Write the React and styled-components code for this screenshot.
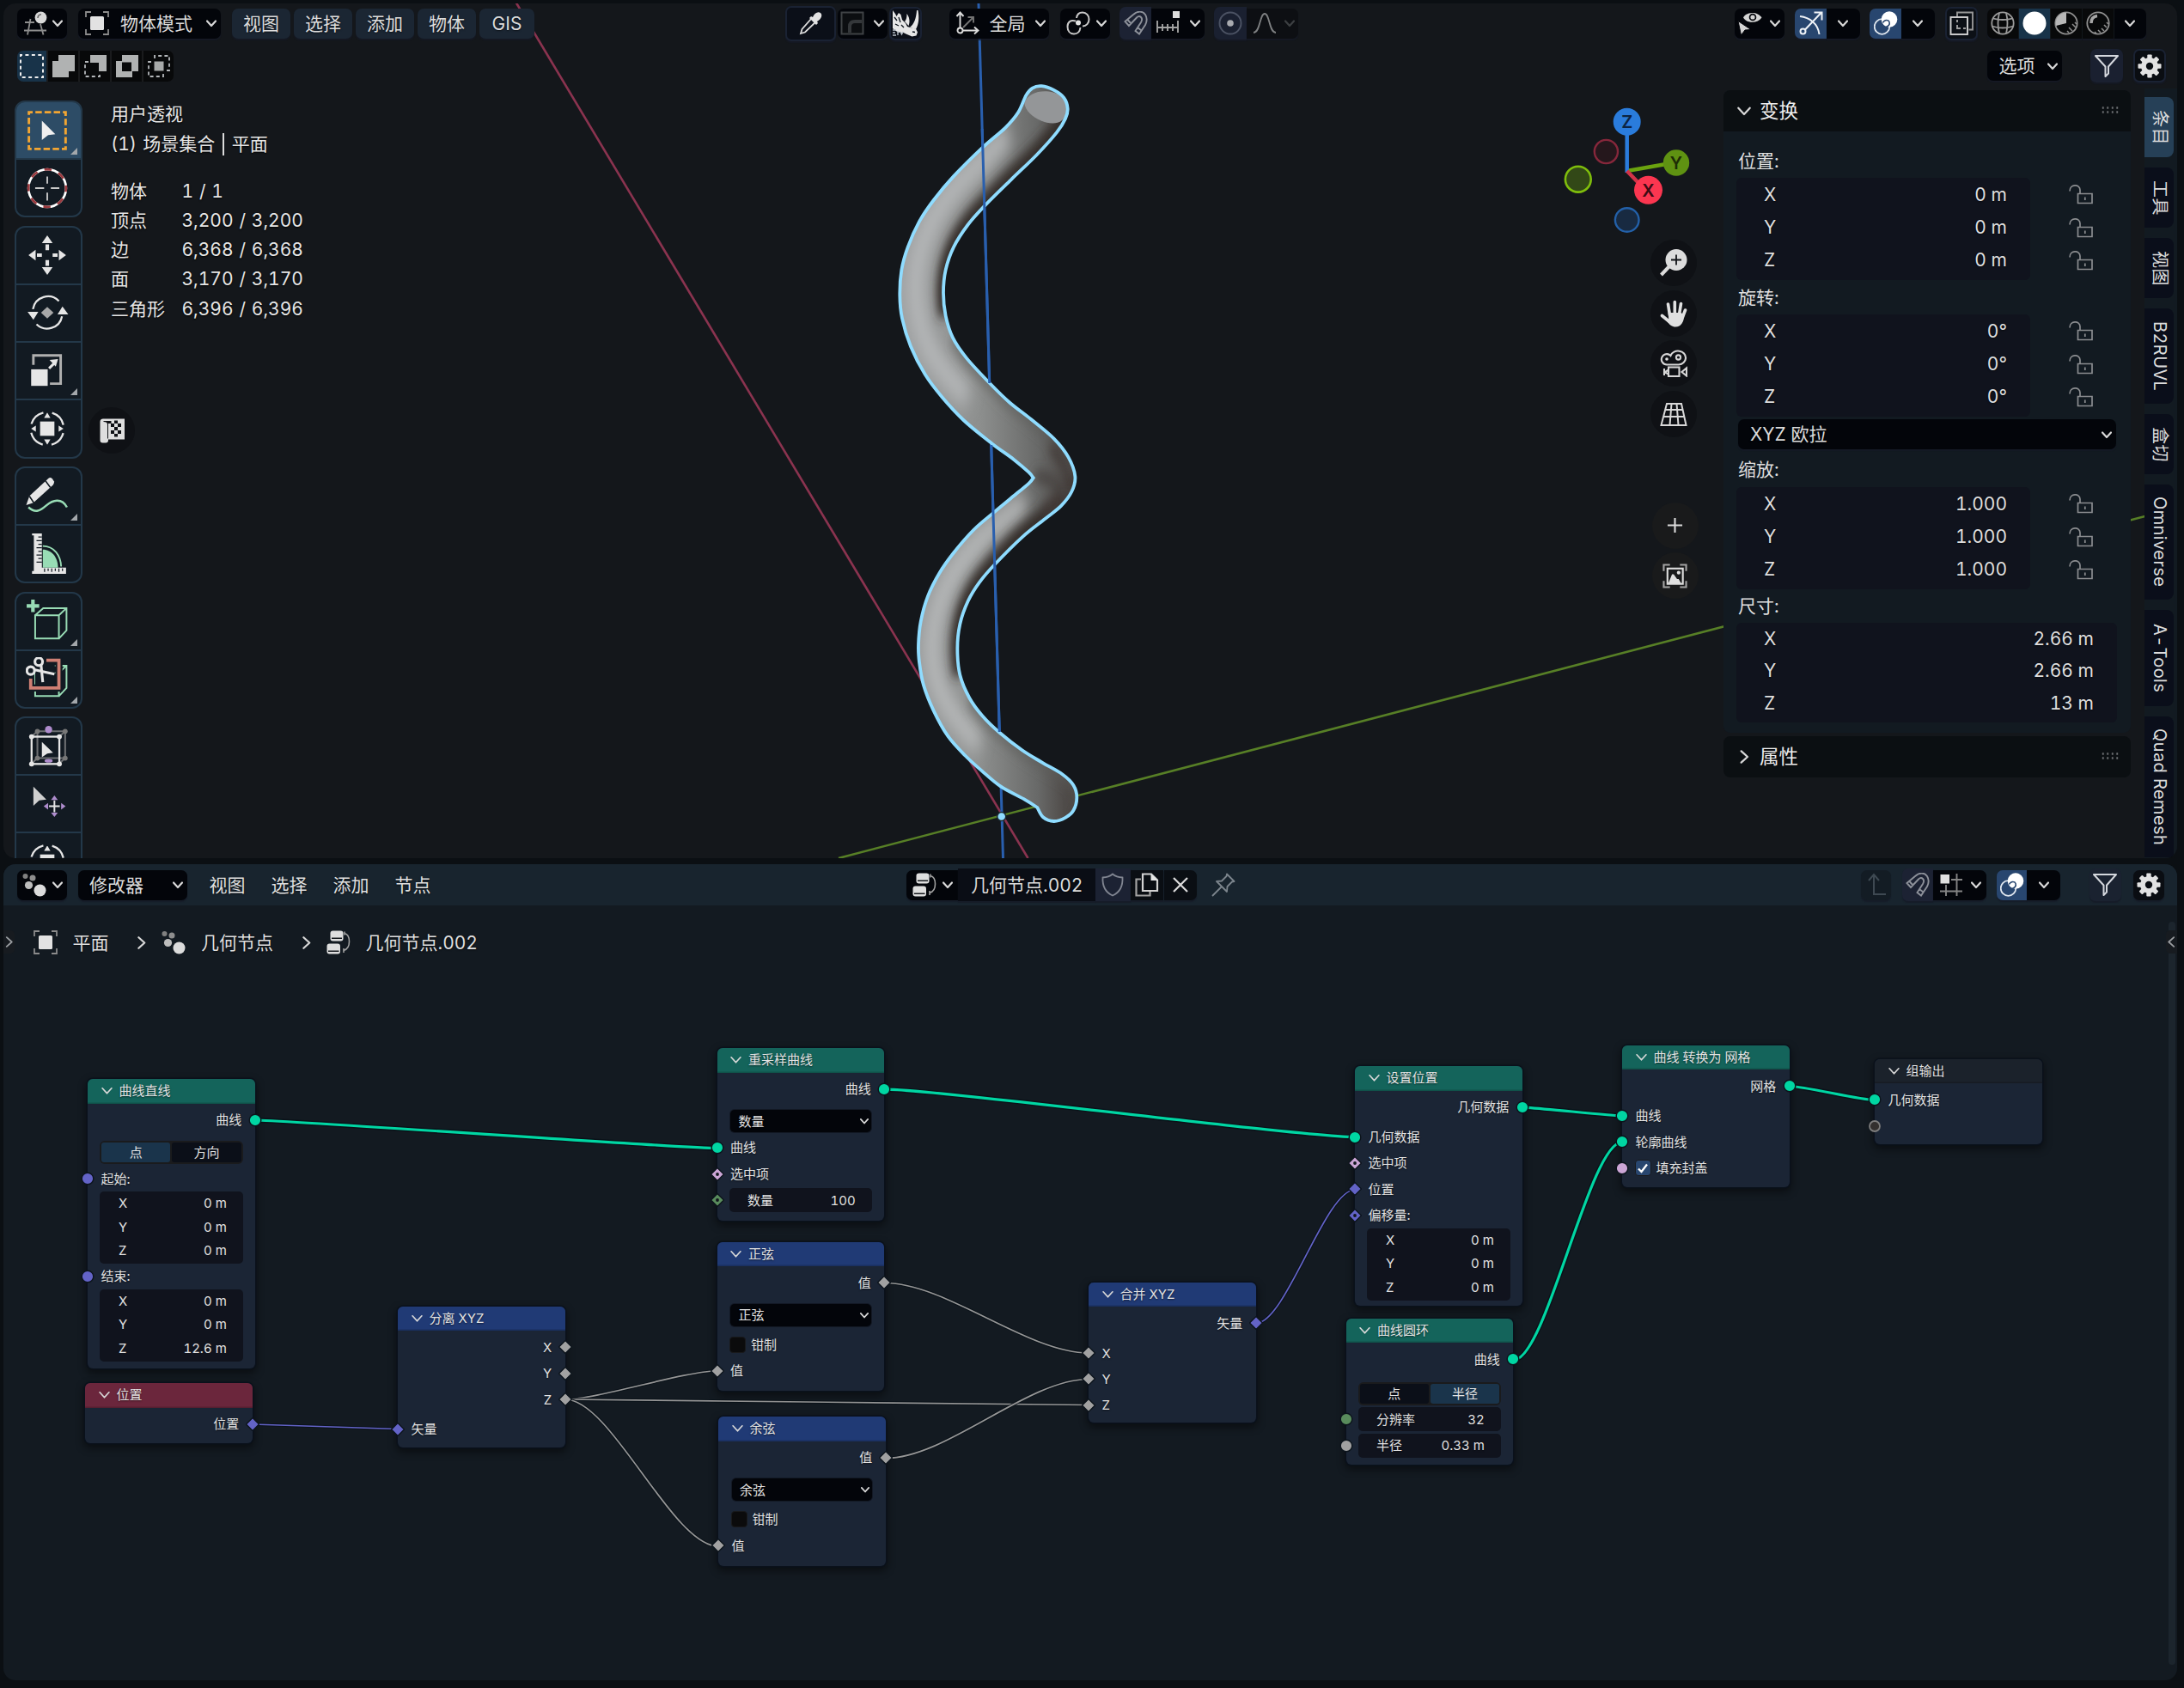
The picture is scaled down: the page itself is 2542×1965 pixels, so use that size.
import React from "react";
import styled, { createGlobalStyle, css } from "styled-components";

const GlobalStyle = createGlobalStyle`
  * { box-sizing: border-box; }
  body {
    margin: 0;
    background: #0b0f13;
    font-family: Inter, "Noto Sans CJK SC", sans-serif;
    font-size: 21px;
    font-variant-numeric: tabular-nums;
    color: #dfdfdf;
  }
  svg { display: block; flex: none; }
`;

const Screen = styled.div`
  width: 2542px;
  height: 1965px;
  padding: 4px 8px 9px 4px;
  display: flex;
  flex-direction: column;
  gap: 7px;
  overflow: hidden;
  white-space: nowrap;
  line-height: 1;
`;

/* ---------- shared header parts ---------- */

const Group = styled.div`
  display: flex;
  align-items: center;
  margin-left: ${(p) => (p.$push ? "auto" : `${p.$ml || 0}px`)};
`;

const Button = styled.div`
  width: ${(p) => p.$w}px;
  height: ${(p) => p.$h || 35}px;
  margin-left: ${(p) => p.$ml || 0}px;
  margin-top: ${(p) => p.$mt || 0}px;
  padding: 0 ${(p) => p.$pr ?? 6}px 0 ${(p) => p.$pl ?? 6}px;
  display: flex;
  align-items: center;
  justify-content: ${(p) => p.$justify || "space-between"};
  flex: none;
  border-radius: ${(p) => p.$radius || "7px"};
  background: ${(p) => p.$bg || "#03050a"};
  color: #dcdcdc;
  box-shadow: 0 2px 1px rgba(22, 26, 38, 0.7);
  ${(p) => p.$ring && css`border: 2px solid #1a2233;`}
`;

const Label = styled.span`
  margin-left: ${(p) => p.$ml || 0}px;
  text-shadow: 0 1px 2px rgba(0, 0, 0, 0.55);
`;

const LEFT = "7px 0 0 7px";
const RIGHT = "0 7px 7px 0";

const Chevron = ({ w = 12, color = "#d8d8d8", dir = "down", sw = 2.2 }) => {
  const turn = { down: 0, right: -90, left: 90 }[dir];
  return (
    <svg width={w} height={w} viewBox="0 0 12 12" fill="none" stroke={color} strokeWidth={sw * (12 / w)}
      strokeLinecap="round" strokeLinejoin="round">
      <path d="M1 3.500 6 9l5-5.500" transform={`rotate(${turn} 6 6)`} />
    </svg>
  );
};

/* ---------- icons ---------- */

const Icon = ({ s = 28, box = 28, children, ...rest }) => (
  <svg width={s} height={s} viewBox={`0 0 ${box} ${box}`} fill="none" stroke="#dcdcdc" strokeWidth="2" {...rest}>
    {children}
  </svg>
);

const View3dIcon = () => (
  <Icon stroke="#8d8d8d" strokeWidth="1.8">
    <path d="M2 13h11M1 22.500h26M8.500 9 5 27.500M20 15l3.500 12.500" />
    <circle cx="20.500" cy="7.500" r="6.900" fill="#d9d9d9" stroke="none" />
    <path d="M17 8c0-2.500 1.500-4 4-4.300" stroke="#6a6a6a" strokeWidth="1.500" />
  </Icon>
);

const ObjectIcon = () => (
  <Icon stroke="#8b8b8b" strokeWidth="1.800">
    <path d="M1 7V1h6M21 1h6v6M27 21v6h-6M7 27H1v-6" />
    <rect x="6" y="6" width="16" height="16" rx="1.500" fill="#e2e2e2" stroke="none" />
  </Icon>
);

const GeoNodesIcon = () => (
  <Icon stroke="none" fill="#dcdcdc">
    <circle cx="3.500" cy="4" r="3" fill="#808080" />
    <circle cx="12" cy="6" r="3.500" fill="#8e8e8e" />
    <circle cx="7.500" cy="14.500" r="4.600" fill="#bdbdbd" />
    <circle cx="20.500" cy="20.500" r="7" />
  </Icon>
);

const NodeTreeIcon = () => (
  <Icon stroke="#a0a0a0" strokeWidth="1.600">
    <path d="M21 3.500c4 1 5.500 4 5.500 9.500s-1.500 9-6.500 10.500M21 1.500v4M20 21v5" />
    <rect x="4.500" y="0.500" width="15" height="12" rx="3" fill="#dedede" stroke="none" />
    <rect x="0.500" y="15.500" width="15.500" height="12" rx="3" fill="#dedede" stroke="none" />
    <path d="M6 9.300h12M2 24.300h12.500" stroke="#15181d" />
  </Icon>
);

const EyedropperIcon = () => (
  <Icon strokeWidth="1.800">
    <path d="M2 26l1.500-5L14.500 8.500l4.500 4.500L7 24.500 2 26z" />
    <path d="M16 7c2-5 6-7 9-5 2.500 2 1.500 7-4 10l1 2-2 2-8-8 2-2z" fill="#e2e2e2" stroke="none" />
  </Icon>
);

const CornerIcon = () => (
  <Icon stroke="#3f4245">
    <rect x="1.500" y="1.500" width="25" height="25" fill="#0c0e11" />
    <path d="M11 25V18q0-6 6-6h8" strokeWidth="4" stroke="#34373a" />
  </Icon>
);

const RhinoIcon = () => (
  <svg width="32" height="32" viewBox="0 0 32 32" fill="#e6e6e6">
    <path d="M1 1l3 4 1.500 3L8 4l2.500 2 1.500 6 4 4 2 4 5 1.500 5 1 2 4-1.500 4-5 1-7-3-5-2.500-4 1L1 22z" />
    <path d="M21 21c5-4 7.500-11 8-20h1.500c1.500 8 1 16-2.500 22z" />
    <path d="M15 14c2-2 2.500-5 2.500-9 3 4 4 9 2 14z" />
    <path d="M1 24h4M1 27h3M1 30h4M7 25v5M10 26l1.500 3 1.500-3" stroke="#b9c0c8" strokeWidth="1.400" />
    <path d="M3 9l3 4M8 9l2 6M4 17l4 2M11 18l3 3M24 26l3 0.500" stroke="#0b121b" strokeWidth="1.300" />
  </svg>
);

const OrientationIcon = () => (
  <Icon strokeWidth="1.900">
    <path d="M9 19 20 8M14.500 7H21v6.500" stroke="#747474" />
    <path d="M5.500 19.500V2M1.500 6l4-4.500 4 4.500M8.500 22.500H26M22 18.500l4.500 4-4.500 4" />
    <circle cx="5.500" cy="22.500" r="3" />
  </Icon>
);

const PivotIcon = () => (
  <Icon stroke="#c8c8c8">
    <path d="M11 11.500C5 9.500 1.500 13 1.500 18c0 5 3 8.500 7.500 8.500S16 23 16.500 19" />
    <path d="M12 8C12.500 4 15 1.500 19 1.500c4.500 0 7.500 3.500 7.500 8s-3 8-7.500 8" />
    <circle cx="14" cy="13.500" r="3" fill="#e2e2e2" stroke="none" />
  </Icon>
);

const MagnetIcon = ({ c = "#8d919a" }) => (
  <Icon stroke={c} strokeWidth="1.900">
    <path d="M1.500 12 11 4C16-0.500 22-0.500 25 4c2.500 4 2 8 0 12l-7 10.500-4.500-3.500 6.500-10c1.500-2.500 1.500-4.500 0-6-1.500-1.500-3.500-1-5 0.500L6 17zM4 9.500l4.500 5M20.500 22.500 16 19" />
  </Icon>
);

const IncrementIcon = () => (
  <Icon stroke="#a2a2a2" strokeWidth="1.900">
    <path d="M2 11v14M26 11v14M2 19h24M8 15v8M14 15v8M20 15v8" />
    <rect x="20" y="0" width="8" height="8" fill="#dedede" stroke="none" />
  </Icon>
);

const ProportionalIcon = () => (
  <Icon stroke="#4b5263">
    <circle cx="14" cy="14" r="12.500" />
    <circle cx="14" cy="14" r="3.800" fill="#a9abb0" stroke="none" />
  </Icon>
);

const FalloffIcon = () => (
  <Icon stroke="#7e8082" strokeWidth="1.800">
    <path d="M1 25c8 0 7-22 13-22s5 22 13 22" />
  </Icon>
);

const EyeCursorIcon = () => (
  <Icon stroke="none" fill="#d4d4d4">
    <path d="M6 7.500C10 0 23 0 27.500 7.500 23 14.500 10 14.500 6 7.500z" />
    <circle cx="17" cy="7" r="4.300" fill="#03050a" />
    <circle cx="17" cy="7" r="2.600" />
    <path d="M0 11.500l15 10-7 0.500-4.500 6z" stroke="#03050a" strokeWidth="1" />
  </Icon>
);

const GizmoIcon = () => (
  <Icon stroke="#eef2f7">
    <path d="M1 6c11 1.500 21 8 22.500 21M7 21.500 25.500 2M17.500 1.500H26.500V10.500" />
    <circle cx="4.500" cy="23.500" r="3" />
  </Icon>
);

const OverlayIcon = () => (
  <Icon>
    <circle cx="9.500" cy="18" r="8.800" stroke="#dfe6ee" strokeWidth="1.800" />
    <circle cx="18" cy="9.500" r="9.300" fill="#fff" stroke="none" />
    <path d="M10.500 13.500c2-4 6.500-3.500 7.500-1 1 3-1 5-4 6" stroke="#28466f" strokeWidth="1.600" />
  </Icon>
);

const XrayIcon = () => (
  <Icon stroke="#d2d2d2" strokeWidth="1.900">
    <path d="M9 6V1.500h18v20h-4.500" stroke="#969696" />
    <rect x="1.500" y="7" width="19.500" height="20" />
    <path d="M9 10v3M9 16v4h4M16 20h3" stroke="#a0a0a0" />
  </Icon>
);

const WireIcon = () => (
  <Icon stroke="#9b9b9b" strokeWidth="1.800">
    <circle cx="14" cy="14" r="12.700" />
    <path d="M2.500 8.500q11.500 3 23 0M1.500 17.500q12.500 4 25 0M10 2q-3 12 0 24M18 2q3 12 0 24" />
  </Icon>
);

const SolidIcon = () => <Icon stroke="none"><circle cx="14" cy="14" r="13.500" fill="#fff" /></Icon>;

const MaterialIcon = () => (
  <Icon stroke="#8e8e8e" strokeWidth="1.800">
    <circle cx="14" cy="14" r="12.700" />
    <path d="M14 14V1.500A12.500 12.500 0 0 0 2 17z" fill="#b7b7b7" stroke="none" />
    <path d="M17 25l-2-2M21 23l-4-4M25 19l-4-4M26 15l-2-2" stroke="#8e8e8e" strokeWidth="1.500" />
  </Icon>
);

const RenderedIcon = () => (
  <Icon stroke="#8e8e8e" strokeWidth="1.800">
    <circle cx="14" cy="14" r="12.700" />
    <path d="M6 14c0-5 2.500-8 7-8.500" strokeWidth="3.500" stroke="#a5a5a5" />
    <path d="M12 26l-2-2M17 25l-3-3M21 23l-3-3M24 19l-3-3M26 15l-2-2" strokeWidth="1.600" />
  </Icon>
);

const FilterIcon = () => (
  <Icon stroke="#d4d7dd">
    <path d="M1 2h26L16 14.500v8L12.500 26V14.500z" strokeLinejoin="round" />
  </Icon>
);

const GearIcon = () => (
  <Icon stroke="none" fill="#e2e2e2">
    <circle cx="14" cy="14" r="10" />
    {[0, 45, 90, 135, 180, 225, 270, 315].map((a) => (
      <rect key={a} x="11.300" y="0.500" width="5.400" height="6" rx="1" transform={`rotate(${a} 14 14)`} />
    ))}
    <circle cx="14" cy="14" r="4.200" fill="#0a0d12" />
  </Icon>
);

const ShieldIcon = () => (
  <Icon stroke="#808591" strokeWidth="1.800">
    <path d="M14 1.500c3.500 3 7 3.800 11.500 4C26 15 23 22.500 14 26.500 5 22.500 2 15 2.500 5.500 7 5.300 10.500 4.500 14 1.500z" />
  </Icon>
);

const CopyIcon = () => (
  <Icon stroke="#d2d2d2" strokeWidth="2.200">
    <path d="M7 7.500H1.500v19h16V22" stroke="#a2a2a2" />
    <path d="M9 1.500h10l7 7V21H9z" />
    <path d="M18.500 1v8H27z" fill="#e6e6e6" stroke="none" />
  </Icon>
);

const CloseIcon = () => <Icon strokeWidth="2.200"><path d="M6 6l16 16M22 6 6 22" /></Icon>;

const PinIcon = () => (
  <Icon stroke="#7c858d" strokeWidth="1.800">
    <path d="M18 1.500 26.500 10l-2.500 0.500-5.500 5.500-0.500 6L6 10l6-0.500L17.500 4zM11.500 16.500 1 27" strokeLinejoin="round" />
  </Icon>
);

const ParentIcon = () => (
  <Icon stroke="#3e4952">
    <path d="M26 25H12V3M6 9l6-7 6 7" />
  </Icon>
);

const GridSnapIcon = () => (
  <Icon stroke="#858585" strokeWidth="1.900">
    <path d="M14 8h13M1 21.500h26M8 14v13M20.500 1v26" />
    <rect x="1.500" y="2" width="10.500" height="10.500" fill="#e0e0e0" stroke="none" />
  </Icon>
);

/* ---------- 3D viewport ---------- */

const Viewport = styled.section`
  position: relative;
  height: 995px;
  flex: none;
  display: flex;
  flex-direction: column;
  border-radius: 14px;
  overflow: hidden;
  background: #14171b;
`;

const Scene = styled.svg`
  position: absolute;
  inset: 0;
`;

const ToolHeader = styled.header`
  position: relative;
  height: ${(p) => p.$h}px;
  flex: none;
  display: flex;
  align-items: center;
  padding: 0 ${(p) => p.$pr}px 0 16px;
`;

const MenuButton = styled(Button)`
  background: #1b2633;
  padding: 0;
  justify-content: center;
  margin-right: 4px;
`;

const ModeStrip = styled.div`
  display: flex;
  gap: 2px;
  height: 36px;
  border-radius: 7px;
  overflow: hidden;
  background: #1a1b1d;
`;

const ModeCell = styled.div`
  width: ${(p) => p.$w || 35}px;
  display: grid;
  place-items: center;
  background: ${(p) => (p.$on ? "#183349" : "#08090a")};
`;

const Stage = styled.div`
  position: relative;
  flex: 1;
  display: flex;
  align-items: flex-start;
`;

const Toolbar = styled.div`
  margin: 14px 0 0 13px;
  width: 79px;
  display: flex;
  flex-direction: column;
  gap: 9.500px;
`;

const ToolGroup = styled.div`
  height: ${(p) => p.$h}px;
  display: flex;
  flex-direction: column;
  gap: 2px;
  border: 2px solid #233849;
  border-radius: 12px;
  overflow: hidden;
  background: #233849;
`;

const Tool = styled.div`
  flex: 1;
  position: relative;
  display: grid;
  place-items: center;
  padding-right: 3px;
  background: ${(p) => (p.$on ? "#2d4c66" : "#121a22")};
  ${(p) => p.$more && css`
    &::after {
      content: "";
      position: absolute;
      right: 4px;
      bottom: 4px;
      border-left: 8px solid transparent;
      border-bottom: 8px solid #a3a7ab;
    }
  `}
`;

const Info = styled.div`
  margin: 13px 0 0 33px;
  line-height: 34.200px;
  color: #e6e6e6;
  text-shadow: 0 1px 2px #000;
`;

const InfoTitle = styled.div`
  display: flex;
  align-items: center;
  height: 34.700px;
  word-spacing: 1.500px;
`;

const Divider = styled.i`
  width: 2px;
  height: 26px;
  margin: 0 9px 0 8.500px;
  background: #dcdcdc;
`;

const StatGrid = styled.div`
  margin-top: 20.500px;
  display: grid;
  grid-template-columns: 82.500px auto;
  word-spacing: 1.200px;
`;

const RoundButton = styled.div`
  width: 54px;
  height: 54px;
  border-radius: 50%;
  background: ${(p) => p.$bg || "#0f1115"};
  display: grid;
  place-items: center;
  ${(p) => p.$float && css`
    position: absolute;
    left: 99px;
    top: 371px;
  `}
`;

const NavColumn = styled.div`
  margin-left: auto;
  margin-top: 16px;
  width: 162px;
  display: flex;
  flex-direction: column;
`;

const NavButtons = styled.div`
  margin: ${(p) => p.$mt}px 0 0 ${(p) => p.$ml}px;
  display: flex;
  flex-direction: column;
  gap: 4.500px;
`;

const Sidebar = styled.aside`
  width: 474px;
  margin: 2px 16px 0 29px;
  display: flex;
  flex-direction: column;
  gap: 4px;
`;

const Panel = styled.div`
  height: ${(p) => p.$h}px;
  background: #121a21;
  border-radius: 8px;
  overflow: hidden;
`;

const PanelHead = styled.div`
  height: 48px;
  padding: 0 13px 0 16px;
  display: flex;
  align-items: center;
  gap: 10px;
  background: #0b0f12;
  font-size: 22.500px;
  color: #eee;
`;

const Grip = styled.div`
  margin: 0 0 4px auto;
  width: 22px;
  height: 9px;
  background-image: radial-gradient(circle, #6c6f72 1px, transparent 1.400px);
  background-size: 5.500px 5px;
`;

const PanelBody = styled.div`
  padding: 16px 15px 0;
`;

const FieldTitle = styled.div`
  height: ${(p) => p.$h}px;
  display: flex;
  align-items: center;
  padding-left: 2px;
  padding-bottom: ${(p) => (p.$dy < 0 ? -p.$dy * 2 : 0)}px;
  padding-top: ${(p) => (p.$dy > 0 ? p.$dy * 2 : 0)}px;
`;

const FieldRow = styled.div`
  display: flex;
`;

const FieldBox = styled.div`
  width: ${(p) => p.$w}px;
  height: ${(p) => p.$h}px;
  padding: 0 27px 0 32px;
  display: flex;
  flex-direction: column;
  background: #10131d;
  border-radius: 6px;
`;

const FieldLine = styled.div`
  height: ${(p) => p.$h}px;
  display: flex;
  align-items: center;
  justify-content: space-between;
`;

const Locks = styled.div`
  margin-left: 45px;
  display: flex;
  flex-direction: column;
`;

const LockCell = styled.div`
  height: 38.400px;
  display: grid;
  place-items: center;
`;

const Tabs = styled.nav`
  width: 38px;
  height: 896px;
  padding-top: 10px;
  display: flex;
  flex-direction: column;
  gap: 12px;
  background: #121a21;
`;

const Tab = styled.div`
  width: 34px;
  height: ${(p) => p.$h}px;
  flex: none;
  display: flex;
  align-items: center;
  justify-content: ${(p) => (p.$cut ? "flex-start" : "center")};
  padding-top: ${(p) => (p.$cut ? 14 : 0)}px;
  padding-left: 2px;
  writing-mode: vertical-rl;
  text-orientation: sideways;
  font-size: 20px;
  letter-spacing: 0.400px;
  border-radius: ${(p) => (p.$cut ? "0 8px 0 0" : "0 8px 8px 0")};
  background: ${(p) => (p.$on ? "#264057" : "#0a0e1a")};
  color: #dcdcdc;
`;

const LockIcon = () => (
  <svg width="28" height="24" viewBox="0 0 28 24" fill="none" stroke="#8b8d90" strokeWidth="1.700">
    <path d="M1 8.500C1 0 13 0 13 7v4M10.500 11.500h16.500v11H10.500zM18.800 15.500v3.500" />
  </svg>
);

const AXES = ["X", "Y", "Z"];

function PanelField({ title, titleH, dy = 0, values, locks = true }) {
  const line = locks ? 38.4 : 37.3;
  return (
    <>
      <FieldTitle $h={titleH} $dy={dy}>{title}</FieldTitle>
      <FieldRow>
        <FieldBox $w={locks ? 342 : 443} $h={locks ? 118.5 : 115.5}>
          {AXES.map((a, i) => (
            <FieldLine key={a} $h={line}><Label>{a}</Label><Label>{values[i]}</Label></FieldLine>
          ))}
        </FieldBox>
        {locks && <Locks>{AXES.map((a) => <LockCell key={a}><LockIcon /></LockCell>)}</Locks>}
      </FieldRow>
    </>
  );
}

/* Control points of the helix silhouette, in its own stretched units. */
const INNER = [[742, 1450], [700, 1435], [615, 1409], [550, 1379], [490, 1348], [430, 1310], [380, 1260], [345, 1210], [330, 1165], [327, 1130], [335, 1085], [360, 1035], [400, 990], [450, 950], [520, 905], [590, 871], [650, 843], [712, 814], [728, 803]];
const OUTER = [[728, 803], [712, 792], [660, 767], [582, 735], [485, 690], [410, 645], [350, 600], [300, 545], [270, 490], [262, 445], [268, 395], [290, 350], [330, 300], [380, 258], [450, 211], [552, 154], [630, 116], [675, 86], [703, 52], [725, 38], [757, 34], [800, 42], [835, 57], [848, 78], [840, 98], [810, 125], [740, 169], [650, 218], [560, 268], [500, 306], [450, 350], [422, 395], [414, 440], [422, 485], [447, 528], [495, 568], [577, 618], [645, 655], [720, 688], [800, 726], [850, 762], [874, 800], [862, 830], [825, 858], [770, 883], [690, 919], [595, 972], [540, 1008], [500, 1045], [472, 1090], [463, 1138], [472, 1190], [505, 1235], [550, 1270], [610, 1303], [690, 1338], [760, 1362], [830, 1385], [868, 1406], [880, 1430], [868, 1456], [840, 1470], [800, 1477], [762, 1469], [742, 1450]];

function smooth(pts) {
  let d = "";
  for (let i = 0; i < pts.length - 1; i++) {
    const a = pts[Math.max(0, i - 1)], b = pts[i], c = pts[i + 1], e = pts[Math.min(pts.length - 1, i + 2)];
    d += `C${b[0] + (c[0] - a[0]) / 6} ${b[1] + (c[1] - a[1]) / 6} ${c[0] - (e[0] - b[0]) / 6} ${c[1] - (e[1] - b[1]) / 6} ${c[0]} ${c[1]}`;
  }
  return d;
}
const start = (p) => `M${p[0]} ${p[1]}`;
const HELIX = start(INNER[0]) + smooth(INNER) + smooth(OUTER) + "Z";
const open = (pts) => start(pts[0]) + smooth(pts);
const UPPER_RIGHT = open(OUTER.slice(23, 34));
const MID_TOP = open(OUTER.slice(34, 42));
const FOLD = open(OUTER.slice(39, 45));
const LOWER_RIGHT = open(OUTER.slice(41, 52));
const LOW_TOP = open(OUTER.slice(52, 61));
const UPPER_LIGHT = open([[640, 128], [560, 175], [470, 225], [400, 275], [350, 330], [322, 390], [318, 445], [335, 505], [375, 560], [440, 610], [500, 645]]);
const LOWER_LIGHT = open([[700, 850], [600, 895], [510, 945], [440, 1000], [395, 1060], [375, 1130], [385, 1190], [420, 1240], [480, 1290], [540, 1325]]);

function SceneDrawing() {
  return (
    <Scene width="2530" height="995" viewBox="4 4 2530 995" fill="none">
      <defs>
        <linearGradient id="tube" gradientUnits="userSpaceOnUse" x1="262" x2="880" y1="0" y2="0">
          <stop offset="0" stopColor="#a0a2a3" />
          <stop offset="0.450" stopColor="#8d8f8e" />
          <stop offset="0.780" stopColor="#686968" />
          <stop offset="1" stopColor="#443e3b" />
        </linearGradient>
        <clipPath id="body"><path d={HELIX} /></clipPath>
        <filter id="soft" filterUnits="userSpaceOnUse" x="0" y="-50" width="1200" height="1700">
          <feGaussianBlur stdDeviation="14 12" />
        </filter>
        <filter id="softer" filterUnits="userSpaceOnUse" x="0" y="-50" width="1200" height="1700">
          <feGaussianBlur stdDeviation="22 20" />
        </filter>
      </defs>
      <path d="M601 3.500 1196.500 999" stroke="#8a334f" strokeWidth="2.600" />
      <path d="M976 999 2534 591.200" stroke="#577f26" strokeWidth="2.600" />
      <path d="M1139 4 1167.500 999" stroke="#295fae" strokeWidth="3" />
      <g transform="translate(960 80) scale(0.33333 0.5931)">
        <path d={HELIX} fill="url(#tube)" />
        <g clipPath="url(#body)">
          <path d={UPPER_LIGHT} stroke="#b6b8b9" strokeWidth="50" filter="url(#softer)" />
          <path d={LOWER_LIGHT} stroke="#b9bbbc" strokeWidth="44" filter="url(#softer)" />
          <g filter="url(#soft)" strokeWidth="50">
            <path d={UPPER_RIGHT} stroke="#352f2c" />
            <path d={LOWER_RIGHT} stroke="#352f2c" />
            <path d={FOLD} stroke="#3f3835" strokeWidth="60" />
            <path d={MID_TOP} stroke="#5a5a59" strokeWidth="30" opacity="0.600" />
            <path d={LOW_TOP} stroke="#5a5a59" strokeWidth="30" opacity="0.600" />
            <path d="M735 798 790 808 860 838" stroke="#484543" strokeWidth="24" />
          </g>
          <path d="M697 68C715 30 860 40 848 80 838 112 790 110 755 102 725 95 700 82 697 68Z" fill="#949698" />
        </g>
        <path d={HELIX} stroke="#8fdcff" strokeWidth="3.800" vectorEffect="non-scaling-stroke" />
      </g>
      <path d="M1143.200 150 1151.700 446M1153.700 518 1163.300 852" stroke="#295fae" strokeWidth="3" />
      <circle cx="1165.700" cy="950.500" r="5" fill="#8fdcff" stroke="#1b2a30" strokeWidth="1.500" />
    </Scene>
  );
}

const AxisText = styled.text`
  font: 600 20px Inter, sans-serif;
  text-anchor: middle;
`;

const AxisGizmo = () => (
  <svg width="160" height="160" viewBox="1815 119 160 160" fill="none">
    <circle cx="1869.400" cy="176.500" r="13.600" fill="#25171c" stroke="#86273b" strokeWidth="2.400" />
    <path d="M1893.700 199 1945 190" stroke="#6ba30f" strokeWidth="4.500" />
    <path d="M1893.700 201V150" stroke="#2a7cdc" strokeWidth="4.500" />
    <path d="M1893.700 199 1910 216" stroke="#d23348" strokeWidth="4.500" />
    <circle cx="1836.800" cy="208.700" r="14.900" fill="#324817" stroke="#7fbd0c" strokeWidth="2.600" />
    <circle cx="1893.700" cy="256" r="13.800" fill="#182a41" stroke="#2360a8" strokeWidth="2.400" />
    <circle cx="1893.700" cy="141.700" r="16" fill="#2a7cdc" />
    <circle cx="1951" cy="189.500" r="15.200" fill="#5f9212" />
    <circle cx="1918.500" cy="221.300" r="16.500" fill="#fb3650" />
    <AxisText x="1893.700" y="149" fill="#0c2444">Z</AxisText>
    <AxisText x="1951" y="197" fill="#1d2d05">Y</AxisText>
    <AxisText x="1918.500" y="229" fill="#3d0b13">X</AxisText>
  </svg>
);

const ZoomIcon = () => (
  <Icon s={32} box={32} stroke="none" fill="#dcdcdc">
    <circle cx="19" cy="12.500" r="12.500" />
    <path d="M11 20 1.500 30" stroke="#dcdcdc" strokeWidth="4" />
    <path d="M19 6.500v12M13 12.500h12" stroke="#111317" strokeWidth="1.800" />
  </Icon>
);
const HandIcon = () => (
  <Icon s={32} box={32} stroke="#e0e0e0" strokeWidth="3.600" strokeLinecap="round">
    <path d="M11.500 18 9.500 5M17.300 16 17.300 2.500M22.500 17 24.500 4.500M26.500 20 29.500 12M10.500 25 2.500 18.500" />
    <path d="M9.700 15h15l3.500 3c0 7.500-3.500 13.500-10 13.500-4 0-7-2-11-8l3-1z" fill="#e0e0e0" stroke="none" />
  </Icon>
);
const CameraIcon = () => (
  <Icon s={32} box={32} stroke="#d6d6d6" strokeWidth="2.100">
    <path d="M8 17.500A6.200 6.200 0 1 1 12.500 7 9 8 0 1 1 22 17.500z" />
    <circle cx="8" cy="11" r="1.800" fill="#e0e0e0" stroke="none" />
    <circle cx="21.500" cy="9" r="2.600" />
    <rect x="10" y="20.500" width="12.500" height="10.500" />
    <path d="M10 23.500l-4 2.500 4 3M5 22v8M31 21.500v9L25.500 26z" />
  </Icon>
);
const PerspIcon = () => (
  <Icon s={32} box={32} stroke="#d8d8d8" strokeWidth="2">
    <path d="M8 4h17l5.500 25H1.500zM6.500 11h20M4.500 19h24M13.500 4l-2 25M19.500 4l2 25" />
  </Icon>
);
const PlusIcon = () => <Icon s={19} box={20} strokeWidth="2.200"><path d="M10 1v18M1 10h18" /></Icon>;
const FrameIcon = () => (
  <Icon s={29} box={30} stroke="#a2a2a2" strokeWidth="2.200">
    <path d="M1.500 9V1.500H9M21 1.500h7.500V9M28.500 21v7.500H21M9 28.500H1.500V21" />
    <rect x="6" y="6" width="18.500" height="18.500" stroke="#dcdcdc" />
    <path d="M7 24l4.500-11h2l4 5.500 2 0 3 5.500z" fill="#e0e0e0" stroke="none" />
    <circle cx="19.500" cy="11" r="2.200" fill="#e0e0e0" stroke="none" />
  </Icon>
);
const UvIcon = () => (
  <svg width="29" height="29" viewBox="0 0 29 29" fill="#dedede">
    <path d="M4 0.500h25v24H10v1q0 3-3 3H3.500q-3 0-3-3V4q0-3.500 3.500-3.500z" />
    <path d="M4.500 3h9v3H10v17.500H9V7q0-3-4.500-3zM17 2.500h4V6h-4zM13 6h4v4h-4zM21 6h4v4h-4zM17 10h4v4h-4zM13 14h4v4h-4zM21 14h4v4h-4zM17 18h4v3.500h-4z" fill="#0f1115" />
  </svg>
);

/* tool icons, drawn on a 48-unit square */
const ToolIcon = ({ children }) => <Icon s={50} box={48}>{children}</Icon>;
const W = "#e6e6e6";
const GREEN = "#98dcb5";
const ARROWS = "M24 1l6 10H18zM24 47l6-10H18zM1 24l9-6v12zM47 24l-9-6v12z";

const SelectBoxIcon = () => (
  <ToolIcon>
    <rect x="3.500" y="3.500" width="41" height="41" stroke="#f2a532" strokeWidth="2.800" strokeDasharray="7.200 3.050" strokeDashoffset="3" />
    <path d="M18 13l15 15-8 1-7 5.500z" fill="#f0f0f0" stroke="none" />
  </ToolIcon>
);
const CursorIcon = () => (
  <ToolIcon>
    <circle cx="24" cy="24" r="21" stroke="#fff" strokeWidth="2.600" />
    <circle cx="24" cy="24" r="21" stroke="#9b3a3f" strokeWidth="2.600" strokeDasharray="8.250 8.250" strokeDashoffset="4" />
    <path d="M24 11v8M24 29v9M10.500 24h10M28 24h9.500" stroke="#c9c9c9" strokeWidth="1.800" />
  </ToolIcon>
);
const MoveIcon = () => (
  <ToolIcon>
    <path d="M24 2l6 8.500H18zM24 46l6-8.500H18zM3 24l8-6v12zM45 24l-8-6v12z" fill={W} stroke="none" />
    <path d="M24 12v6.500M24 29.500v6.500M12.500 24h5.500M30 24h5.500" stroke={W} strokeWidth="4" />
  </ToolIcon>
);
const RotateIcon = () => (
  <ToolIcon>
    <path d="M8 20A17 17 0 0 1 37 11M40.500 28A17 17 0 0 1 12 37" stroke={W} strokeWidth="2.200" />
    <path d="M2 23h12L8.500 32zM35.500 26h12L41 17z" fill={W} stroke="none" />
    <path d="M24 17.500l7 6.500-7 6.500-7-6.500z" fill="#a8a8a8" stroke="none" />
  </ToolIcon>
);
const ScaleIcon = () => (
  <ToolIcon>
    <path d="M8.500 17V6.500H39V38H27" stroke="#b0b0b0" strokeWidth="2.800" />
    <rect x="6" y="22" width="18.500" height="18.500" fill={W} stroke="none" />
    <path d="M26 21l6-6" stroke={W} strokeWidth="2.800" /><path d="M26.500 11.500 36 10.500l-2.500 8.500z" fill={W} stroke="none" />
  </ToolIcon>
);
const TransformIcon = () => (
  <ToolIcon>
    <circle cx="24" cy="24" r="18.500" stroke={W} strokeWidth="2.200" strokeDasharray="19 10.060" strokeDashoffset="-5" />
    <path d={ARROWS} transform="translate(3.600 3.600) scale(.85)" fill={W} stroke="#121a22" strokeWidth="2" />
    <rect x="16" y="16" width="16" height="16" fill={W} stroke="none" />
  </ToolIcon>
);
const AnnotateIcon = () => (
  <ToolIcon>
    <path d="M3 36c8 7 13 4 20-2s17-9 23 2" stroke={GREEN} strokeWidth="2.400" />
    <path d="M0.500 33.500 4 23.500 25.500 3.500q2-1.500 4 .500l2 3q1 2-1 4L8.500 31z" fill={W} stroke="none" />
    <path d="M4 23.500l5 7.500M22 6.500l5.500 7.500" stroke="#121a22" strokeWidth="1.500" />
  </ToolIcon>
);
const MeasureIcon = () => (
  <ToolIcon>
    <path d="M7 1h11v38h27v7H7v-3h2V3H7z" fill={W} stroke="none" />
    <path d="M14 5h4M12 9h6M14 13h4M12 17h6M14 21h4M12 25h6M14 29h4M12 33h6M21 40v4M25 40v3M29 40v4M33 40v3M37 40v4M41 40v3" stroke="#121a22" strokeWidth="1.200" />
    <path d="M19 19c10 0 17 9 17 20H19z" fill={GREEN} stroke="none" />
    <path d="M19 15c13 0 20 11 20.500 23" stroke={GREEN} strokeWidth="1.800" />
  </ToolIcon>
);
const CUBE = "M10.500 17.500h26.500v26H10.500zM10.500 17.500l9-8h26v25l-8.500 9M37 17.500l8.500-8";
const AddCubeIcon = () => (
  <ToolIcon>
    <path d={CUBE} stroke={GREEN} strokeWidth="1.900" />
    <path d="M8 0v14M1 7h14" stroke={GREEN} strokeWidth="4" />
  </ToolIcon>
);
const CutCubeIcon = () => (
  <ToolIcon>
    <path d={CUBE} stroke={GREEN} strokeWidth="1.900" />
    <path d="M5.500 24V34.500H37V3.500H23" stroke="#121a22" strokeWidth="8" />
    <path d="M5.500 24V34.500H37V3.500H23" stroke="#cf7f73" strokeWidth="3.600" />
    <path d="M10.500 6h22v25h-22z" fill="#121a22" stroke="none" />
    <path d="M9 14l23 5M17 8l2 20" stroke={W} strokeWidth="3" />
    <circle cx="5.500" cy="15" r="4.300" stroke={W} strokeWidth="3" /><circle cx="14.500" cy="5" r="4.300" stroke={W} strokeWidth="3" />
  </ToolIcon>
);
const LatticeIcon = () => (
  <ToolIcon>
    <path d="M13 7h31v30H13zM6.500 13l6.500-6M37.500 13 44 7M6.500 43l6.500-6M37.500 43l6.500-6" stroke="#6d6f72" />
    <rect x="6.500" y="13" width="31" height="30.500" stroke={W} strokeWidth="2.200" />
    {[[13, 7], [44, 7], [13, 37], [44, 37]].map(([x, y]) => <circle key={x + "-" + y} cx={x} cy={y} r="2.800" fill="#777" stroke="none" />)}
    {[[6.5, 13], [37.5, 13], [6.5, 43.5], [37.5, 43.5]].map(([x, y]) => <circle key={x + "-" + y} cx={x} cy={y} r="2.800" fill={W} stroke="none" />)}
    <circle cx="25.500" cy="5" r="4" fill="#ae8ccd" stroke="none" /><ellipse cx="25.500" cy="40" rx="4.500" ry="2" fill="#ae8ccd" stroke="none" />
    <path d="M18 19l12.500 12-6.500 1-6 4z" fill={W} stroke="none" />
  </ToolIcon>
);
const TweakIcon = () => (
  <ToolIcon>
    <path d="M8.500 4.500 23 19l-8 1-6.500 6z" fill="#cfcfcf" stroke="none" />
    <path d="M32 20v13M26 26.500h12" stroke={W} strokeWidth="1.900" />
    <path d="M32 14.500l3.800 5h-7.600zM32 38.500l3.800-5h-7.600zM20 26.500l5-3.800v7.600zM44.500 26.500l-5-3.800v7.600z" fill="#ae8ccd" stroke="none" />
  </ToolIcon>
);

const TOOLS = [
  { h: 136, items: [[SelectBoxIcon, true], [CursorIcon]] },
  { h: 271, items: [[MoveIcon], [RotateIcon], [ScaleIcon, true], [TransformIcon]] },
  { h: 136, items: [[AnnotateIcon, true], [MeasureIcon]] },
  { h: 136, items: [[AddCubeIcon, true], [CutCubeIcon, true]] },
  { h: 203, items: [[LatticeIcon], [TweakIcon], [TransformIcon]] },
];

const STATS = [["物体", "1 / 1"], ["顶点", "3,200 / 3,200"], ["边", "6,368 / 6,368"], ["面", "3,170 / 3,170"], ["三角形", "6,396 / 6,396"]];
const MENU_3D = [["视图", 68], ["选择", 68], ["添加", 68], ["物体", 68], ["GIS", 64]];
const TABS = [["条目", 70], ["工具", 70], ["视图", 70], ["B2RUVL", 111], ["盒切", 70], ["Omniverse", 134], ["A-Tools", 112], ["Quad Remesh", 164]];

const SelectModes = () => {
  const dash = { stroke: "#b4b7ba", strokeWidth: 1.8, strokeDasharray: "4 3.2" };
  return (
    <ModeStrip>
      <ModeCell $on $w={34}><Icon><rect x="1" y="1" width="26" height="26" stroke="#eee" strokeDasharray="4 3.430" strokeDashoffset="2" /></Icon></ModeCell>
      <ModeCell><Icon stroke="none"><path d="M8 1h19v19h-7v7H1V8h7z" fill="#b0b2b2" /></Icon></ModeCell>
      <ModeCell><Icon stroke="none"><path d="M8 1h19v19h-9V10H8z" fill="#b0b2b2" /><path d="M6 9H2v17h17v-4" {...dash} /></Icon></ModeCell>
      <ModeCell><Icon stroke="none"><path fillRule="evenodd" d="M8 1h19v19h-7v7H1V8h7zM8 9.500v10.500h11V9.500z" fill="#b0b2b2" /></Icon></ModeCell>
      <ModeCell><Icon stroke="none"><rect x="8.500" y="8.500" width="11" height="11" fill="#a8aaaa" /><path d="M9 5V2h17v17h-3M5 9H2v17h17v-3" {...dash} /></Icon></ModeCell>
    </ModeStrip>
  );
};

function ViewportEditor() {
  return (
    <Viewport>
      <SceneDrawing />
      <ToolHeader $h={46.5} $pr={36.5}>
        <Button $w={58} $pl={7} $pr={5}><View3dIcon /><Chevron /></Button>
        <Button $w={166} $ml={13} $pl={8} $pr={5}>
          <ObjectIcon /><Label $ml={-3}>物体模式</Label><Chevron />
        </Button>
        <Group $ml={13}>
          {MENU_3D.map(([t, w]) => <MenuButton key={t} $w={w}><Label>{t}</Label></MenuButton>)}
        </Group>
        <Group $ml={288}>
          <Button $w={59} $h={41} $ring $bg="#0b0f18" $justify="center"><EyedropperIcon /></Button>
          <Button $w={58} $ml={2} $pl={3} $pr={4}><CornerIcon /><Chevron /></Button>
          <Button $w={38} $h={39} $ml={2} $pl={0} $pr={0} $ring $bg="#0b0f18" $justify="center"><RhinoIcon /></Button>
          <Button $w={116} $ml={32} $pl={7} $pr={4}><OrientationIcon /><Label>全局</Label><Chevron /></Button>
          <Button $w={58} $ml={13} $pl={7} $pr={4}><PivotIcon /><Chevron /></Button>
          <Button $w={37} $h={38} $ml={11} $pl={5} $bg="#1c2233" $radius={LEFT}><MagnetIcon /></Button>
          <Button $w={62} $pl={5} $pr={5} $radius={RIGHT}><IncrementIcon /><Chevron /></Button>
          <Button $w={38} $h={38} $ml={11} $pl={5} $bg="#1a2030" $radius={LEFT}><ProportionalIcon /></Button>
          <Button $w={60} $pl={7} $pr={4} $bg="#0d0f13" $radius={RIGHT}><FalloffIcon /><Chevron color="#3c3f42" /></Button>
        </Group>
        <Group $push>
          <Button $w={58} $pl={4} $pr={5}><EyeCursorIcon /><Chevron /></Button>
          <Button $w={37} $ml={12} $pl={5} $bg="#28466f" $radius={LEFT}><GizmoIcon /></Button>
          <Button $w={39} $radius={RIGHT} $justify="center"><Chevron /></Button>
          <Button $w={37} $ml={11} $pl={5} $bg="#28466f" $radius={LEFT}><OverlayIcon /></Button>
          <Button $w={39} $radius={RIGHT} $justify="center"><Chevron /></Button>
          <Button $w={38} $h={39} $ml={12} $pl={3} $ring $bg="#0c1016"><XrayIcon /></Button>
          <Button $w={36} $ml={11} $pl={4} $bg="#08090a" $radius={LEFT}><WireIcon /></Button>
          <Button $w={36} $ml={1} $pl={4} $bg="#183349" $radius="0"><SolidIcon /></Button>
          <Button $w={36} $ml={1} $pl={4} $bg="#08090a" $radius="0"><MaterialIcon /></Button>
          <Button $w={36} $ml={1} $pl={4} $bg="#08090a" $radius="0"><RenderedIcon /></Button>
          <Button $w={37} $ml={1} $radius={RIGHT} $justify="center"><Chevron /></Button>
        </Group>
      </ToolHeader>
      <ToolHeader $h={52.5} $pr={13.5}>
        <SelectModes />
        <Group $push>
          <Button $w={87} $pl={14} $pr={5}><Label>选项</Label><Chevron /></Button>
          <Button $w={38} $h={39} $ml={33} $pl={5} $bg="#1a2030"><FilterIcon /></Button>
          <Button $w={38} $h={39} $ml={12} $pl={3} $ring $bg="#0a0d12"><GearIcon /></Button>
        </Group>
      </ToolHeader>
      <Stage>
        <Toolbar>
          {TOOLS.map((g, gi) => (
            <ToolGroup key={gi} $h={g.h}>
              {g.items.map(([I, more], i) => <Tool key={i} $more={more} $on={gi === 0 && i === 0}><I /></Tool>)}
            </ToolGroup>
          ))}
        </Toolbar>
        <RoundButton $float><UvIcon /></RoundButton>
        <Info>
          <InfoTitle>用户透视</InfoTitle>
          <InfoTitle>(1) 场景集合<Divider />平面</InfoTitle>
          <StatGrid>
            {STATS.map(([k, v]) => <React.Fragment key={k}><span>{k}</span><span>{v}</span></React.Fragment>)}
          </StatGrid>
        </Info>
        <NavColumn>
          <AxisGizmo />
          <NavButtons $mt={0} $ml={106}>
            <RoundButton><ZoomIcon /></RoundButton>
            <RoundButton><HandIcon /></RoundButton>
            <RoundButton><CameraIcon /></RoundButton>
            <RoundButton><PerspIcon /></RoundButton>
          </NavButtons>
          <NavButtons $mt={76} $ml={107.5}>
            <RoundButton $bg="#191a1b"><PlusIcon /></RoundButton>
            <RoundButton $bg="#191a1b"><FrameIcon /></RoundButton>
          </NavButtons>
        </NavColumn>
        <Sidebar>
          <Panel $h={748}>
            <PanelHead><Chevron w={16} /><Label>变换</Label><Grip /></PanelHead>
            <PanelBody>
              <PanelField title="位置:" titleH={38} dy={-1} values={["0 m", "0 m", "0 m"]} />
              <PanelField title="旋转:" titleH={40.5} dy={1} values={["0°", "0°", "0°"]} />
              <Button $w={440} $ml={2} $mt={3.5} $pl={14} $pr={5}><Label>XYZ 欧拉</Label><Chevron /></Button>
              <PanelField title="缩放:" titleH={44} dy={1.5} values={["1.000", "1.000", "1.000"]} />
              <PanelField title="尺寸:" titleH={39.5} values={["2.66 m", "2.66 m", "13 m"]} locks={false} />
            </PanelBody>
          </Panel>
          <Panel $h={48}>
            <PanelHead><Chevron w={16} dir="right" /><Label>属性</Label><Grip /></PanelHead>
          </Panel>
        </Sidebar>
        <Tabs>
          {TABS.map(([t, h], i) => (
            <Tab key={t} $h={h} $on={i === 0} $cut={i === TABS.length - 1}>{t}</Tab>
          ))}
        </Tabs>
      </Stage>
    </Viewport>
  );
}

/* ---------- node editor ---------- */

const NodeEditor = styled.section`
  flex: 1;
  display: flex;
  flex-direction: column;
  border-radius: 14px;
  overflow: hidden;
  background: #131a21;
`;

const NodeHeader = styled.header`
  height: 48px;
  flex: none;
  display: flex;
  align-items: center;
  padding: 0 15px 0 16px;
  background: #18242e;
`;

const MenuLabel = styled(Label)`
  margin-right: 30px;
`;

const Canvas = styled.div`
  position: relative;
  flex: 1;
`;

const PathBar = styled.div`
  display: flex;
  align-items: center;
  height: 86px;
  padding-left: 35px;
`;

const EdgeHandle = styled.div`
  position: absolute;
  top: 29px;
  ${(p) => p.$side}: 0;
  width: 13px;
  height: 27px;
  display: grid;
  place-items: center;
  padding-right: ${(p) => (p.$side === "left" ? 3 : 0)}px;
  border-radius: ${(p) => (p.$side === "left" ? "0 5px 5px 0" : "5px 0 0 5px")};
  background: #171b20;
`;

const ScrollBar = styled.div`
  position: absolute;
  right: 2px;
  top: 19px;
  bottom: 18px;
  width: 8px;
  border-radius: 4px;
  background: #1c252d;
`;

const LinkLayer = styled.svg`
  position: absolute;
  left: 0;
  top: 0;
`;

const NodeBox = styled.div`
  position: absolute;
  left: ${(p) => p.$x - 4}px;
  top: ${(p) => p.$y - 1054}px;
  width: 194.800px;
  height: ${(p) => p.$h}px;
  background: #1b2535;
  border-radius: 6px;
  box-shadow: 0 0 0 1.500px #0a111b, 0 4px 10px 2px rgba(0, 0, 0, 0.45);
  font-size: 15px;
  color: #e2e2e2;
`;

const NodeHead = styled.div`
  height: 28.500px;
  padding: 0 0 1px 15.500px;
  display: flex;
  align-items: center;
  gap: 8px;
  border-radius: 6px 6px 0 0;
  background: ${(p) => p.$c};
  box-shadow: inset 0 -1.500px 0 rgba(0, 0, 0, 0.18);
  margin-bottom: 4.200px;
`;

const NodeRow = styled.div`
  position: relative;
  height: 30.400px;
  margin-top: ${(p) => p.$mt || 0}px;
  padding: 0 ${(p) => p.$pad ?? 15.5}px;
  display: flex;
  align-items: center;
  justify-content: ${(p) => (p.$out ? "flex-end" : "flex-start")};
`;

const SocketMark = styled.svg`
  position: absolute;
  top: 7.200px;
  ${(p) => (p.$out ? "right" : "left")}: -8px;
`;

const NodeSelect = styled.div`
  width: 100%;
  height: 26px;
  padding: 0 3px 0 9.500px;
  display: flex;
  align-items: center;
  justify-content: space-between;
  background: #03050a;
  border-radius: 5px;
  box-shadow: 0 0 0 1px #131925;
`;

const NodeValue = styled.div`
  width: 100%;
  height: 28px;
  padding: 0 19.500px 0 21.500px;
  display: flex;
  align-items: center;
  justify-content: space-between;
  background: #10131d;
  border-radius: 5px;
`;

const NodeVector = styled.div`
  margin: -0.400px 13.500px -0.400px 14px;
  height: 84px;
  padding: 0 19.500px 0 22px;
  background: #10131d;
  border-radius: 5px;
`;

const VectorLine = styled.div`
  height: 27.400px;
  display: flex;
  align-items: center;
  justify-content: space-between;
`;

const Toggle = styled.div`
  width: 100%;
  height: 27px;
  display: flex;
  gap: 2px;
  padding: 2px;
  border-radius: 6px;
  background: #1a1b1d;
`;

const ToggleItem = styled.div`
  flex: 1;
  display: grid;
  place-items: center;
  border-radius: 3px;
  background: ${(p) => (p.$on ? "#1a344b" : "#0b0f18")};
`;

const CheckBox = styled.div`
  width: 19px;
  height: 19px;
  margin: 0 6px 0 -1px;
  border-radius: 4px;
  border: 1.500px solid #191a1c;
  background: ${(p) => (p.$on ? "#28466f" : "#0b0b0c")};
  display: grid;
  place-items: center;
`;

const COLORS = { geo: "#00d6a3", float: "#a1a1a1", vec: "#6363c7", bool: "#cca6d6", int: "#598c5c" };

function Socket({ type, shape = "circle", out }) {
  const c = COLORS[type];
  return (
    <SocketMark $out={out} width="16" height="16" viewBox="-8 -8 16 16" stroke="#0c141c" strokeWidth="1.400">
      {shape === "circle" && <circle r="6.800" fill={c} />}
      {shape === "empty" && <circle r="6" fill="#33302f" stroke="#7d7d7d" strokeWidth="1.800" />}
      {shape.startsWith("diamond") && <path d="M0-7.500 7.500 0 0 7.500-7.500 0z" fill={c} />}
      {shape === "diamond-dot" && <circle r="1.900" fill="#10151c" stroke="none" />}
    </SocketMark>
  );
}

function Row({ row }) {
  const { kind, text, sock, shape, mt, value, on, options } = row;
  if (kind === "vector") {
    return (
      <NodeVector>
        {AXES.map((a, i) => <VectorLine key={a}><span>{a}</span><span>{row.values[i]}</span></VectorLine>)}
      </NodeVector>
    );
  }
  const out = kind === "out";
  const wide = kind === "value" || kind === "toggle";
  return (
    <NodeRow $out={out} $mt={mt} $pad={wide ? 14 : 15.5}>
      {sock && <Socket type={sock} shape={shape} out={out} />}
      {kind === "select" && <NodeSelect><Label>{text}</Label><Chevron w={10} sw={1.8} /></NodeSelect>}
      {kind === "value" && <NodeValue><Label>{text}</Label><Label>{value}</Label></NodeValue>}
      {kind === "toggle" && <Toggle>{options.map((o) => <ToggleItem key={o} $on={o === on}>{o}</ToggleItem>)}</Toggle>}
      {kind === "check" && (
        <CheckBox $on={on}>
          {on && <svg width="14" height="14" viewBox="0 0 14 14" fill="none" stroke="#fff" strokeWidth="2.300"><path d="M2 7.500 5.500 11 12 2.500" /></svg>}
        </CheckBox>
      )}
      {(kind === "check" || kind === "in" || out) && <Label>{text}</Label>}
    </NodeRow>
  );
}

const TEAL = "#14645b";
const BLUE = "#203a75";
const zero = ["0 m", "0 m", "0 m"];

const mathNode = (id, name, x, y) => ({
  id, title: name, x, y, h: 173.5, color: BLUE,
  rows: [
    { kind: "out", text: "值", sock: "float", shape: "diamond" },
    { kind: "select", text: name, mt: 7 },
    { kind: "check", text: "钳制", mt: 4.3 },
    { kind: "in", text: "值", sock: "float", shape: "diamond" },
  ],
});

const NODES = [
  { id: "line", title: "曲线直线", x: 102, y: 1256, h: 337, color: TEAL, rows: [
    { kind: "out", text: "曲线", sock: "geo" },
    { kind: "toggle", options: ["点", "方向"], on: "点", mt: 7.5 },
    { kind: "in", text: "起始:", sock: "vec" },
    { kind: "vector", values: zero },
    { kind: "in", text: "结束:", sock: "vec" },
    { kind: "vector", values: ["0 m", "0 m", "12.6 m"] },
  ] },
  { id: "pos", title: "位置", x: 99, y: 1610, h: 69.5, color: "#6b263c", rows: [
    { kind: "out", text: "位置", sock: "vec", shape: "diamond" },
  ] },
  { id: "sep", title: "分离 XYZ", x: 463, y: 1520.5, h: 164, color: BLUE, rows: [
    { kind: "out", text: "X", sock: "float", shape: "diamond" },
    { kind: "out", text: "Y", sock: "float", shape: "diamond" },
    { kind: "out", text: "Z", sock: "float", shape: "diamond" },
    { kind: "in", text: "矢量", sock: "vec", shape: "diamond", mt: 4 },
  ] },
  { id: "resample", title: "重采样曲线", x: 834.5, y: 1220, h: 200.5, color: TEAL, rows: [
    { kind: "out", text: "曲线", sock: "geo" },
    { kind: "select", text: "数量", mt: 7 },
    { kind: "in", text: "曲线", sock: "geo", mt: 0.3 },
    { kind: "in", text: "选中项", sock: "bool", shape: "diamond-dot", mt: 0.3 },
    { kind: "value", text: "数量", value: "100", sock: "int", shape: "diamond-dot" },
  ] },
  mathNode("sin", "正弦", 834.5, 1445.5),
  mathNode("cos", "余弦", 836, 1649),
  { id: "comb", title: "合并 XYZ", x: 1267, y: 1492.5, h: 163.5, color: BLUE, rows: [
    { kind: "out", text: "矢量", sock: "vec", shape: "diamond" },
    { kind: "in", text: "X", sock: "float", shape: "diamond", mt: 4.3 },
    { kind: "in", text: "Y", sock: "float", shape: "diamond" },
    { kind: "in", text: "Z", sock: "float", shape: "diamond" },
  ] },
  { id: "setpos", title: "设置位置", x: 1577, y: 1241, h: 279, color: TEAL, rows: [
    { kind: "out", text: "几何数据", sock: "geo" },
    { kind: "in", text: "几何数据", sock: "geo", mt: 4.3 },
    { kind: "in", text: "选中项", sock: "bool", shape: "diamond-dot" },
    { kind: "in", text: "位置", sock: "vec", shape: "diamond" },
    { kind: "in", text: "偏移量:", sock: "vec", shape: "diamond-dot" },
    { kind: "vector", values: zero },
  ] },
  { id: "circle", title: "曲线圆环", x: 1566.5, y: 1534.5, h: 170, color: TEAL, rows: [
    { kind: "out", text: "曲线", sock: "geo" },
    { kind: "toggle", options: ["点", "半径"], on: "半径", mt: 9.3 },
    { kind: "value", text: "分辨率", value: "32", sock: "int" },
    { kind: "value", text: "半径", value: "0.33 m", sock: "float" },
  ] },
  { id: "mesh", title: "曲线 转换为 网格", x: 1888, y: 1216.5, h: 165.5, color: TEAL, rows: [
    { kind: "out", text: "网格", sock: "geo" },
    { kind: "in", text: "曲线", sock: "geo", mt: 4 },
    { kind: "in", text: "轮廓曲线", sock: "geo" },
    { kind: "check", text: "填充封盖", sock: "bool", on: true, mt: 0.3 },
  ] },
  { id: "output", title: "组输出", x: 2182, y: 1232.5, h: 99.5, color: "#1b222b", rows: [
    { kind: "in", text: "几何数据", sock: "geo" },
    { kind: "in", text: "", sock: "float", shape: "empty" },
  ] },
];

const LINKS = [
  [297, 1304, 834, 1336.7, "geo"],
  [1030, 1268.2, 1577, 1323.6, "geo"],
  [1772, 1289, 1888, 1299, "geo"],
  [2083, 1264.5, 2182, 1280.500, "geo"],
  [1762, 1583, 1888, 1329.5, "geo"],
  [294, 1658, 463, 1663.5, "vec"],
  [1462, 1540.4, 1577, 1385, "vec"],
  [658, 1629, 834, 1596, "float"],
  [658, 1629, 1267, 1635.5, "float"],
  [658, 1629, 836, 1800, "float"],
  [1030, 1493.5, 1267, 1575, "float"],
  [1031, 1697.5, 1267, 1605.5, "float"],
];

function linkPath([x1, y1, x2, y2]) {
  const dx = x2 - x1;
  const slope = Math.abs(y2 - y1) / dx;
  const h = 0.3 * dx * Math.min(1, slope * 3.75);
  return `M${x1} ${y1}C${x1 + h} ${y1} ${x2 - h} ${y2} ${x2} ${y2}`;
}

function NodeEditorPane() {
  return (
    <NodeEditor>
      <NodeHeader>
        <Button $w={58} $pl={6} $pr={5}><GeoNodesIcon /><Chevron /></Button>
        <Button $w={127} $ml={13} $pl={13} $pr={5}><Label>修改器</Label><Chevron /></Button>
        <Group $ml={25.5}>
          {["视图", "选择", "添加", "节点"].map((t) => <MenuLabel key={t}>{t}</MenuLabel>)}
        </Group>
        <Group $ml={523.5}>
          <Button $w={60} $pl={7} $pr={6} $radius={LEFT}><NodeTreeIcon /><Chevron /></Button>
          <Button $w={160} $h={38} $pl={15} $bg="#0a0d15" $radius="0"><Label>几何节点.002</Label></Button>
          <Button $w={41} $h={38} $bg="#1c2233" $radius="0"><ShieldIcon /></Button>
          <Button $w={38} $pl={5} $bg="#0a0e13" $radius="0"><CopyIcon /></Button>
          <Button $w={38} $ml={1} $pl={5} $bg="#0a0e13" $radius={RIGHT}><CloseIcon /></Button>
          <Group $ml={17}><PinIcon /></Group>
        </Group>
        <Group $push>
          <Button $w={35} $pl={3} $bg="#131c24"><ParentIcon /></Button>
          <Button $w={36} $h={38} $ml={13} $pl={4} $bg="#1c2233" $radius={LEFT}><MagnetIcon /></Button>
          <Button $w={62} $pl={7} $pr={6} $radius={RIGHT}><GridSnapIcon /><Chevron /></Button>
          <Button $w={35} $ml={12} $pl={4} $bg="#28466f" $radius={LEFT}><OverlayIcon /></Button>
          <Button $w={39} $radius={RIGHT} $justify="center"><Chevron /></Button>
          <Button $w={37} $h={38} $ml={34} $pl={4} $bg="#1a2230"><FilterIcon /></Button>
          <Button $w={36} $ml={14} $pl={4} $bg="#0a0d12"><GearIcon /></Button>
        </Group>
      </NodeHeader>
      <Canvas>
        <PathBar>
          <ObjectIcon /><Label $ml={17.5}>平面</Label>
          <Group $ml={30}><Chevron w={15} dir="right" /></Group>
          <Group $ml={16.5}><GeoNodesIcon /></Group><Label $ml={18}>几何节点</Label>
          <Group $ml={31}><Chevron w={15} dir="right" /></Group>
          <Group $ml={15.5}><NodeTreeIcon /></Group><Label $ml={18}>几何节点.002</Label>
        </PathBar>
        <ScrollBar />
        <EdgeHandle $side="left"><Chevron w={13} dir="right" color="#9a9da0" sw={1.8} /></EdgeHandle>
        <EdgeHandle $side="right"><Chevron w={13} dir="left" color="#9a9da0" sw={1.8} /></EdgeHandle>
        <LinkLayer width="2530" height="902" viewBox="4 1054 2530 902" fill="none">
          {LINKS.map((l, i) => (
            <g key={i}>
              <path d={linkPath(l)} stroke="#0a1219" strokeWidth={l[4] === "geo" ? 6 : 3.6} />
              <path d={linkPath(l)} stroke={l[4] === "float" ? "#969696" : COLORS[l[4]]} strokeWidth={l[4] === "geo" ? 3.2 : 1.7} />
            </g>
          ))}
        </LinkLayer>
        {NODES.map((n) => (
          <NodeBox key={n.id} $x={n.x} $y={n.y} $h={n.h}>
            <NodeHead $c={n.color}><Chevron w={13} sw={1.7} /><Label>{n.title}</Label></NodeHead>
            {n.rows.map((r, i) => <Row key={i} row={r} />)}
          </NodeBox>
        ))}
      </Canvas>
    </NodeEditor>
  );
}

export default function App() {
  return (
    <Screen>
      <GlobalStyle />
      <ViewportEditor />
      <NodeEditorPane />
    </Screen>
  );
}
